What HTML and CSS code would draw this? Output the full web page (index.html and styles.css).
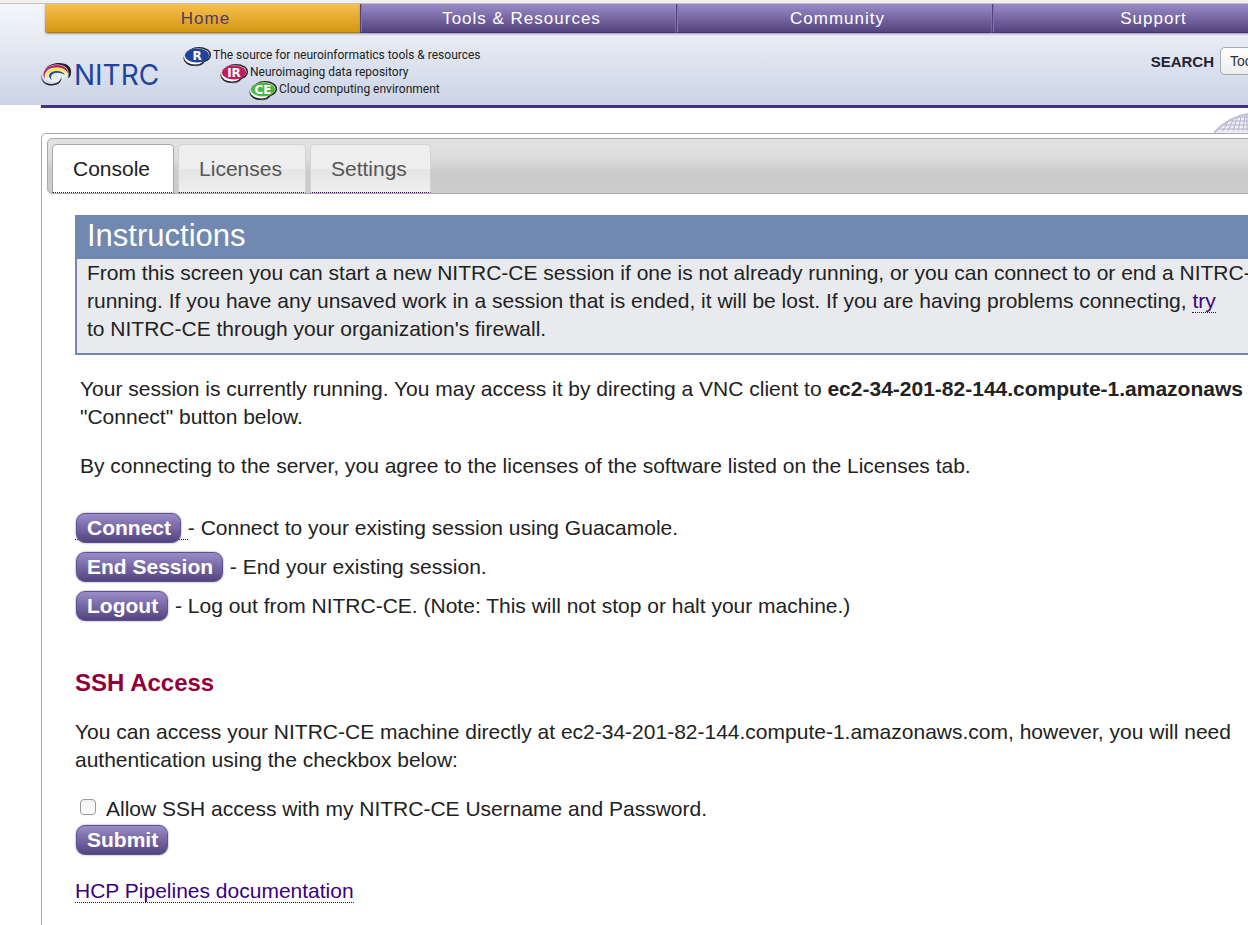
FILE: index.html
```html
<!DOCTYPE html>
<html lang="en">
<head>
<meta charset="utf-8">
<title>NITRC-CE Console</title>
<link rel="stylesheet" href="styles.css">
</head>
<body>
<header class="site-header">
  <nav class="main-nav">
    <a class="nav-item active" href="#">Home</a>
    <a class="nav-item" href="#">Tools &amp; Resources</a>
    <a class="nav-item" href="#">Community</a>
    <a class="nav-item" href="#">Support</a>
  </nav>
  <div class="masthead">
    <div class="brand">
      <svg class="brand-mark" width="32" height="26" viewBox="0 0 32 26" fill="none" aria-hidden="true">
        <ellipse cx="14" cy="12" rx="12" ry="8" fill="#e9edf5"/>
        <path d="M3 8C7 3 12 1 18 1C26 1 31 5 30 11C30 14 28 16 27 16C29 10 27 3 17 2.500C11 2.500 6 4.500 3 8Z" fill="#222"/>
        <path d="M0.500 12C-1 19 4 23.500 11 23.500C17 23.500 21 20 20.500 15C19 20 15 22 10 22C4 22 0 18 0.500 12Z" fill="#222"/>
        <path d="M4 17C-1 9 7 3 16 3C22 3 27 6 27.500 12C25 7 21 5.500 15 5.500C8 5.500 2 10 4 17Z" fill="#c01f68"/>
        <path d="M7 18C2 11 9 6 16 6C22 6 26 9 26 13C23 9 20 8.500 16 8.500C10 8.500 4 12 7 18Z" fill="#ffec20"/>
        <path d="M11 18C4 13 11 8.500 16 9C20 9 22 10 24 13C16 8 7 12 11 18Z" fill="#234a9c"/>
      </svg>
      <span class="brand-name">NITRC</span>
    </div>
    <ul class="services">
      <li class="service service-r">
        <svg class="badge" width="29" height="22" viewBox="0 0 29 22" aria-hidden="true">
          <ellipse cx="16" cy="9" rx="12" ry="8" fill="#222"/><ellipse cx="11" cy="12.500" rx="10.500" ry="7.500" fill="#222"/><ellipse cx="12" cy="11" rx="11" ry="7.500" fill="#fff"/><ellipse cx="15" cy="9" rx="11.500" ry="6.800" fill="#fff"/><ellipse cx="14" cy="9.500" rx="12" ry="7" fill="#1f449c"/><path d="M19 16L22 15Q20 20 12 20.500Q18 19 19 16Z" fill="#222"/>
          <text class="badge-text" x="14" y="14" text-anchor="middle">R</text>
        </svg><span>The source for neuroinformatics tools &amp; resources</span>
      </li>
      <li class="service service-ir">
        <svg class="badge" width="29" height="22" viewBox="0 0 29 22" aria-hidden="true">
          <ellipse cx="16" cy="9" rx="12" ry="8" fill="#222"/><ellipse cx="11" cy="12.500" rx="10.500" ry="7.500" fill="#222"/><ellipse cx="12" cy="11" rx="11" ry="7.500" fill="#fff"/><ellipse cx="15" cy="9" rx="11.500" ry="6.800" fill="#fff"/><ellipse cx="14" cy="9.500" rx="12" ry="7" fill="#bd1d61"/><path d="M19 16L22 15Q20 20 12 20.500Q18 19 19 16Z" fill="#222"/>
          <text class="badge-text" x="14" y="14" text-anchor="middle">IR</text>
        </svg><span>Neuroimaging data repository</span>
      </li>
      <li class="service service-ce">
        <svg class="badge" width="29" height="22" viewBox="0 0 29 22" aria-hidden="true">
          <ellipse cx="16" cy="9" rx="12" ry="8" fill="#222"/><ellipse cx="11" cy="12.500" rx="10.500" ry="7.500" fill="#222"/><ellipse cx="12" cy="11" rx="11" ry="7.500" fill="#fff"/><ellipse cx="15" cy="9" rx="11.500" ry="6.800" fill="#fff"/><ellipse cx="14" cy="9.500" rx="12" ry="7" fill="#4db648"/><path d="M19 16L22 15Q20 20 12 20.500Q18 19 19 16Z" fill="#222"/>
          <text class="badge-text" x="14" y="14" text-anchor="middle">CE</text>
        </svg><span>Cloud computing environment</span>
      </li>
    </ul>
    <form class="search">
      <label for="scope">SEARCH</label>
      <select id="scope"><option>Tools &amp; Resources</option></select>
    </form>
  </div>
</header>
<main class="page">
  <div class="globe-row">
    <svg width="34" height="20" viewBox="0 0 34 20" fill="none" aria-hidden="true">
      <path d="M0 20Q14 4 34 1V20Z" fill="#eeedf2"/>
      <path d="M0 20Q14 4 34 1" stroke="#c0c1d2" stroke-width="2"/>
      <path d="M5 16H34M10 12H34M16 8H34M24 4H34M9 18L14 9M14 18L19 7M19 18L23 5M24 18L27 4M29 18L31 2M33 18V2" stroke="#b3b6d2"/>
    </svg>
  </div>
  <section class="panel">
    <div class="tabs" role="tablist">
      <a class="tab selected" role="tab" aria-selected="true" href="#console">Console</a>
      <a class="tab" role="tab" aria-selected="false" href="#licenses">Licenses</a>
      <a class="tab" role="tab" aria-selected="false" href="#settings">Settings</a>
    </div>
    <div class="content" id="console">
      <section class="notice">
        <h1>Instructions</h1>
        <p>From this screen you can start a new NITRC-CE session if one is not already running, or you can connect to or end a NITRC-CE<br>running. If you have any unsaved work in a session that is ended, it will be lost. If you are having problems connecting, <a href="#">try</a><br>to NITRC-CE through your organization's firewall.</p>
      </section>
      <div class="status">
        <p>Your session is currently running. You may access it by directing a VNC client to <strong>ec2-34-201-82-144.compute-1.amazonaws</strong><br>"Connect" button below.</p>
        <p>By connecting to the server, you agree to the licenses of the software listed on the Licenses tab.</p>
      </div>
      <div class="actions">
        <div><span class="underlined"><button class="btn" type="button">Connect</button>&nbsp;</span>- Connect to your existing session using Guacamole.</div>
        <div><button class="btn" type="button">End Session</button> - End your existing session.</div>
        <div><button class="btn" type="button">Logout</button> - Log out from NITRC-CE. (Note: This will not stop or halt your machine.)</div>
      </div>
      <section>
        <h2>SSH Access</h2>
        <p class="ssh-text">You can access your NITRC-CE machine directly at ec2-34-201-82-144.compute-1.amazonaws.com, however, you will need<br>authentication using the checkbox below:</p>
        <form class="ssh-form">
          <div class="check"><input type="checkbox" id="ssh"><label for="ssh">Allow SSH access with my NITRC-CE Username and Password.</label></div>
          <button class="btn" type="button">Submit</button>
        </form>
        <p class="docs"><a href="#">HCP Pipelines documentation</a></p>
      </section>
    </div>
  </section>
</main>
</body>
</html>
```

FILE: styles.css
```css
* { box-sizing: border-box; }
html { overflow: hidden; }
body {
  margin: 0;
  overflow: hidden;
  background: #fff;
  color: #222;
  font: 21px/28px "Liberation Sans", Arial, sans-serif;
}
p, h1, h2, ul { margin: 0; }
a { color: #3b0083; text-decoration: none; border-bottom: 1px dotted #3b0083; }

.site-header {
  border-top: 3px solid #f2f1f0;
  background: linear-gradient(#f5f7fb, #cbd4e6);
  box-shadow: inset 0 1px #c5c2c0;
  padding-top: 1px;
}
.main-nav { display: flex; margin: 0 -60px 0 45px; }
.nav-item {
  flex: 1 1 0;
  height: 29px;
  padding-left: 6px;
  border: 0;
  border-left: 1px solid #53427f;
  border-bottom: 1px solid #42307a;
  background: linear-gradient(#9a8cc8, #53437f);
  box-shadow: inset 1px 0 #8173ad, 0 1px 2px #9995aa;
  color: #fff;
  font-size: 17px;
  line-height: 29px;
  letter-spacing: 1px;
  text-align: center;
}
.nav-item.active {
  border-left: 0;
  border-bottom-color: #b17c0a;
  border-radius: 0 0 0 3px;
  background: linear-gradient(#f6c04e, #d49713);
  box-shadow: 0 1px 2px #9995aa;
  color: #503a68;
}
.masthead { display: flex; height: 72px; padding-left: 41px; }
.brand { display: flex; flex: none; gap: 1px; width: 130px; height: 54px; padding-top: 29px; }
.brand-name { color: #1f449c; font: 28px/26px Inter, sans-serif; }
.services { list-style: none; padding: 15px 0 0; margin-left: 12px; }
.service { display: flex; align-items: center; height: 17px; color: #222; font: 12px/17px Roboto, sans-serif; white-space: nowrap; }
.service span { margin-left: 1px; padding-bottom: 2px; }
.badge { flex: none; }
.service-ir { margin-left: 37px; }
.service-ce { margin-left: 66px; }
.badge-text { fill: #fff; font: bold 12px "DejaVu Sans", sans-serif; }
.search { display: flex; gap: 6px; margin: 14px -92px 0 auto; height: 28px; }
.search label { font-size: 15px; font-weight: bold; line-height: 30px; color: #202434; }
.search select {
  appearance: none;
  width: 120px;
  border: 1px solid #aaa;
  border-radius: 5px;
  padding: 0 9px;
  background: linear-gradient(#fff, #ececec);
  color: #333;
  font: 14px "Liberation Sans", Arial, sans-serif;
}

.page { margin-left: 41px; border-top: 3px solid #43347d; }
.globe-row { display: flex; justify-content: flex-end; align-items: flex-end; height: 25px; }
.globe-row svg { display: block; }
.panel {
  margin-right: -80px;
  border: 1px solid #aaa;
  border-bottom: 0;
  border-radius: 5px 5px 0 0;
  padding: 4px 5px 0;
  min-height: 800px;
  white-space: nowrap;
}
.tabs {
  display: flex;
  gap: 4px;
  border: 1px solid #aaa;
  border-radius: 5px;
  padding: 5px 4px 0;
  background: linear-gradient(#e3e3e3 0%, #dcdcdc 35%, #cbcbcb 60%, #cccccc 100%);
}
.tab {
  height: 49px;
  padding: 0 23px 0 20px;
  border: 1px solid #d3d3d3;
  border-bottom: 1px dotted #3b0083;
  border-radius: 5px 5px 0 0;
  background: linear-gradient(#eee 0%, #eee 50%, #e4e4e4 51%, #efefef 100%);
  color: #555;
  line-height: 48px;
}
.tab.selected { border-color: #aaa; border-bottom-color: #3b0083; background: #fff; color: #212121; }
.content { padding: 21px 28px 0; }
.notice { border: 2px solid #7188b0; background: #e8eaee; padding-bottom: 10px; }
.notice h1 { background: #7188b0; color: #fff; padding: 0 10px 4px; font-size: 31px; font-weight: normal; line-height: 38px; }
.notice p { padding: 0 10px; }
.status { display: grid; gap: 21px; padding: 20px 5px 0; }
.actions { padding-top: 28px; }
.actions div { height: 39px; line-height: 39px; }
.btn {
  height: 30px;
  margin: 0 1px;
  padding: 0 9px 0 10px;
  border: 1px solid #5f5192;
  border-radius: 9px;
  background: linear-gradient(#9a8cc8, #53437f);
  box-shadow: 0 0 2px #7d7890;
  color: #fff;
  font: bold 21px/28px "Liberation Sans", Arial, sans-serif;
}
.underlined { border-bottom: 1px dotted #222; }
h2 { padding-top: 44px; color: #930039; font-size: 24px; line-height: 28px; }
.ssh-text { padding-top: 21px; }
.ssh-form { padding-top: 21px; }
.check { display: flex; gap: 10px; padding-left: 5px; }
.check input {
  appearance: none;
  width: 16px;
  height: 16px;
  margin: 4px 0 0;
  border: 1px solid #999;
  border-radius: 4px;
  background: linear-gradient(#f2f2f2, #fff);
}
.ssh-form .btn { display: block; margin-top: 2px; }
.docs { padding-top: 22px; }
```
